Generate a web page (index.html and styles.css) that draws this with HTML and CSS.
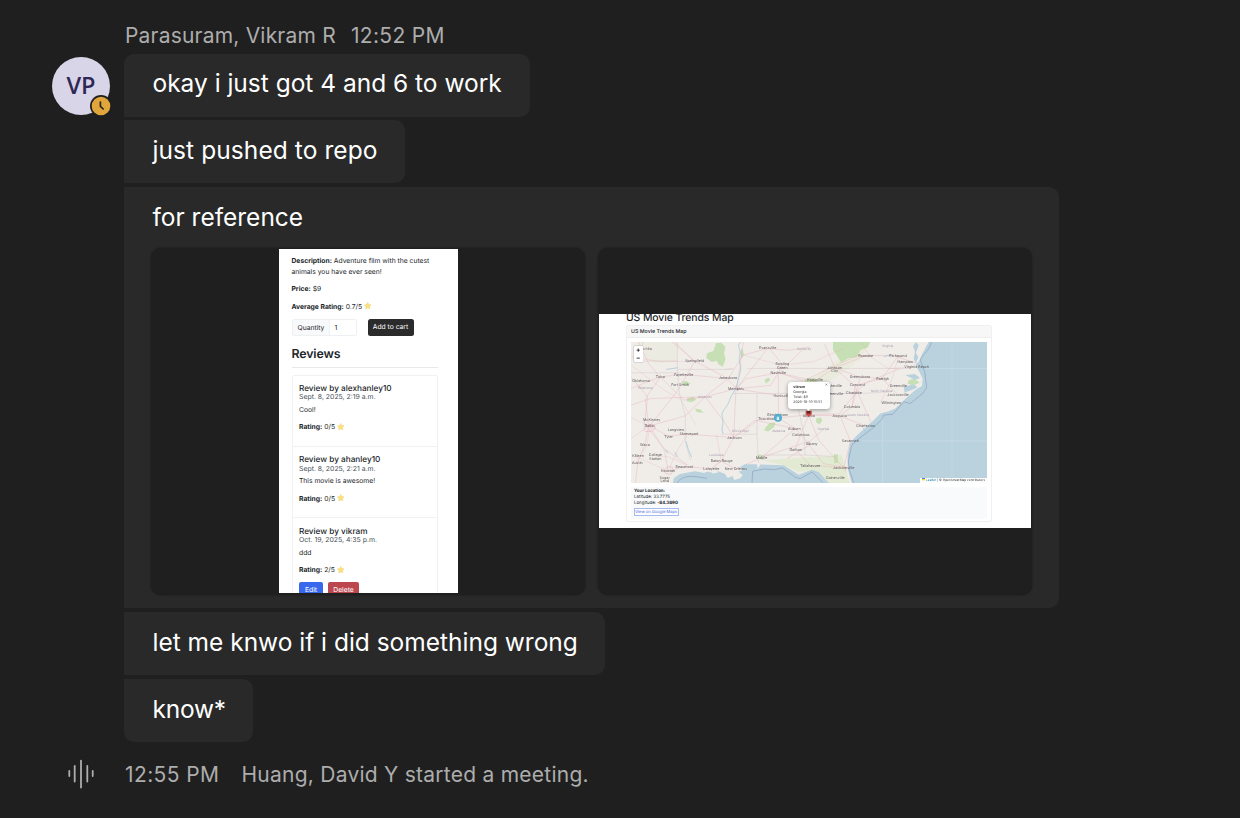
FILE: index.html
```html
<!DOCTYPE html>
<html lang="en">
<head>
<meta charset="utf-8">
<title>Chat</title>
<link rel="stylesheet" href="styles.css">
</head>
<body>
<main class="chat">
  <section class="group">
    <div class="rail">
      <div class="avatar">VP
        <svg class="presence" viewBox="0 0 22 22"><circle cx="11" cy="11" r="11" fill="#1f1f1f"/><circle cx="11" cy="11" r="9.3" fill="#e0a63b"/><path d="M10.4 7v4.3l2.8 2.7" fill="none" stroke="#2b2620" stroke-width="1.7" stroke-linecap="round"/></svg>
      </div>
    </div>
    <div class="messages">
      <header class="meta"><span class="author">Parasuram, Vikram R</span><time>12:52 PM</time></header>
      <div class="bubble b1 first"><span class="t1">okay i just got 4 and 6 to work</span></div>
      <div class="bubble b2"><span>just pushed to repo</span></div>
      <div class="bubble b3">
        <span>for reference</span>
        <div class="gallery">
          <div class="thumb">
            <div class="phone">
              <p><b>Description:</b> Adventure film with the cutest<br>animals you have ever seen!</p>
              <p><b>Price:</b> $9</p>
              <p><b>Average Rating:</b> 0.7/5 <svg class="star"><use href="#star"/></svg></p>
              <div class="buy"><div class="qty"><span>Quantity</span><span>1</span></div><div class="cart">Add to cart</div></div>
              <h2>Reviews</h2>
              <div class="list">
                <article><h3>Review by alexhanley10</h3><small>Sept. 8, 2025, 2:19 a.m.</small><div class="txt">Cool!</div><div class="rate"><b>Rating:</b> 0/5 <svg class="star"><use href="#star"/></svg></div></article>
                <article><h3>Review by ahanley10</h3><small>Sept. 8, 2025, 2:21 a.m.</small><div class="txt">This movie is awesome!</div><div class="rate"><b>Rating:</b> 0/5 <svg class="star"><use href="#star"/></svg></div></article>
                <article><h3>Review by vikram</h3><small>Oct. 19, 2025, 4:35 p.m.</small><div class="txt">ddd</div><div class="rate"><b>Rating:</b> 2/5 <svg class="star"><use href="#star"/></svg></div><div class="actions"><span class="edit">Edit</span><span class="del">Delete</span></div></article>
              </div>
            </div>
          </div>
          <div class="thumb">
            <div class="trends">
              <h1>US Movie Trends Map</h1>
              <div class="card">
                <div class="cardhead">US Movie Trends Map</div>
                <div class="mapwrap">
                  <svg class="map" viewBox="107 111 1068 422" preserveAspectRatio="none">
                    <rect x="107" y="111" width="1068" height="422" fill="#f0ede9"/>
                    <g fill="#dfe8cb" opacity=".75">
                      <path d="M125 111h120v57l-60 8-55-25z" opacity=".35"/>
                      <path d="M500 465l240-15 25 90H680l-30-45-40 5-50-22z"/>
                      <path d="M650 220l70-50 60-50 45-9-30 50-70 55-60 25z" opacity=".5"/>
                    </g>
                    <g fill="#c7dfb4">
                      <path d="M713 111h111l-6 16-22 8-12 22-26 3-20 13-14-22-11-16z"/>
                      <path d="M362 115l16-2 12 12-4 20 5 18-9 22-12-7-10-17-18-3-6-14 18-6z"/>
                      <path d="M335 144l22 4 12 18-20 5-16-12zM275 280l18-5 10 9-14 7-15-3zM298 310l17 3 10 10-20-2zM259 230l14-2 13 7-12 8-14-5zM510 368l12-14 18-3-3 14-18 14-12-3zM662 340l14-4 5 10-8 12-10-6zM716 447h12v26h-12zM486 447l20 3-2 14-16-4zM630 222l28-3 12 9-18 8-24-4zM940 225l18-4 15 12-20 8-16-5zM440 128l6 22-7 12-4-20zM508 223l12-6 5 8-13 11z"/>
                    </g>
                    <g fill="none" stroke="#cbb8c4" stroke-width="1.4" opacity=".8">
                      <path d="M246 111v82h166M142 111v57h104M246 193l6 70 18 70v76l15 55M107 203h145M388 193l26-3M378 387h107M413 265h385l90-5M485 265v125l4 83M600 265l25 120 5 65M505 449h125l90 5M455 190h240l250 0"/>
                    </g>
                    <g fill="none" stroke="#e7a9b6" stroke-width="1.6" opacity=".7">
                      <path d="M107 250l88-35 70-7 130 12 30 31 100-10 25-38 75 24 70-33 90-42 110-1 55 20 50 15M107 300l60-20 162-5 93-24 30-30 97-18 12-25-45-55M130 111l30 65 35 40-45 65 10 82-12 57-20 50-8 63M163 362l55 30 60-5 137 10 82-58 52-1 91-9 92-3 55-70 30-25 95-40M163 362l80-100 55-92-60-59M163 362l107-30 59-57 70-55 45-70 71-19 67 5 62-10M163 362l45 75 10 60 50-13 80 6 30-23 43 25 77-35 147-50 45-40M422 251l-7 146-37 70M422 251l127 20 0 67 50 32 20 20 65 85 70 12M640 330l-25 60-15 42 45 48 100 8M640 330l30 75 75 83M640 330l93 2 77 30M733 332l37-27 25-90 65 6 48-68M745 488l20-80-30-75M549 203l0 68M549 203l110 25 60-40 90-35M659 228l-19 100M770 305l10-65 80-19 50 50M599 370l-120-25-64 52M107 215l50 60-10 80 60 75 70 50M195 215l70 70 65-10 60 80 25 42M230 111l70 58 95 50M444 111l-20 140M517 130l-95 121M627 130l-78 73M790 215l-72-27-30-70M650 415l-75 45M500 456l100-86M718 188l60 55 50 110"/>
                      <path d="M107 155l90 15 103-2M107 400l55-38-55-25M120 475l35-55 8-58M125 455l55 25 35 15M180 450l40 5 55 25M278 387l-30 45-30 65M350 490l28-23-15-80M107 180l100 75 50 30 45 75M445 150l110 30 100-10 90-40M800 111l20 40 60 40 80-6M910 153l-20 70-35 70" opacity=".7"/>
                    </g>
                    <g fill="none" stroke="#e39cab" stroke-width="2" opacity=".6"><path d="M145 371l8-10 20-4 8 12-12 9-18 1zM207 494l9-9h14l5 10-9 12-15-2zM632 321h17v14h-17zM740 482l13 4-3 12M414 246l12-1 2 12M905 153l10 4M128 246h8"/></g>
                    <g fill="#b9d2dd">
                      <path d="M232 533l4-15 18-12 45-8 28 5 16-8 10 10 16-7 20 8 8 12 15-6 5 12 18-5 7-10-12-10 14-5-10-8 14-9 37 0 2 14 8-13 70 2 45 28 40-15 20 7 25 27 15 13z"/>
                      <path d="M1000 111l-17 30-12 27-10 12 11 22 7 38-28 22-20 18-31 30-20 8-25 7-25 25-45 40-20 22-8 38 0 40 12 43H1175V111z"/>
                      <path d="M962 111l8 10-8 22 7 14-8 18-6-14 4-20-6-18zM930 210l28-3 18 12-18 5zM925 245l30-7 15 10-26 8-16 6z"/>
                    </g>
                    <g fill="#f0ede9"><path d="M988 111h10l-15 30-14 24 6-30zM330 497l30-4 8 10-24-2zM395 492l30 5 8 13-22-6zM970 196l12 25-2 22-32 17 26-21z"/></g>
                    <g fill="none" stroke="#a8cbdc" stroke-width="2.5"><path d="M383 385c-8-20 5-30-2-48s14-28 20-48 22-34 26-58 14-38 7-55 5-25-2-45 5-15 5-20M272 408l7 25 10 23M210 432l8 12M213 193l35-5M865 155l20-5M803 367l9 15M238 440l9 15"/></g>
                    <g fill="none" stroke="#8d9fc3" stroke-width="2">
                      <path d="M245 533c20-30 60-18 90-14M470 533l2-35 35-7 30 2 25-5 38 28 15 4 35-20 34 33M1008 111c-5 25-25 35-33 54l13 35 6 48-12 17-37 30-20-5-32 37-28 3-5 12-25 25-38 28-28 25-10 48 3 25 13 39"/>
                    </g>
                    <path d="M800 407h375M990 190h185M1070 111v422M862 340v193" stroke="#cfe0e7" stroke-width="1.7" fill="none"/>
                    <g class="places">
                      <text x="150" y="134">Wichita</text><text x="298" y="172">Springfield</text><text x="517" y="133">Evansville</text><text x="627" y="134" class="st">Kentucky</text><text x="877" y="125" class="st">Virginia</text><text x="811" y="155">Roanoke</text><text x="908" y="157">Richmond</text><text x="930" y="173">Hampton</text><text x="964" y="189">Virginia Beach</text>
                      <text x="561" y="181">Bowling</text><text x="561" y="191">Green</text><text x="549" y="206">Nashville</text><text x="718" y="191">Johnson</text><text x="718" y="201">City</text><text x="195" y="220">Tulsa</text><text x="265" y="213">Fayetteville</text><text x="398" y="223">Jonesboro</text><text x="137" y="231">Oklahoma</text><text x="150" y="252" class="st">Oklahoma</text><text x="254" y="244">Fort Smith</text><text x="422" y="254">Memphis</text><text x="329" y="278" class="st">Arkansas</text>
                      <text x="659" y="229">Knoxville</text><text x="794" y="218">Greensboro</text><text x="862" y="224">Raleigh</text><text x="786" y="243">Concord</text><text x="909" y="247">Greenville</text><text x="859" y="261" class="st">North Carolina</text><text x="776" y="267">Charlotte</text><text x="716" y="246">Asheville</text><text x="718" y="269">Greenville</text><text x="908" y="274">Jacksonville</text><text x="888" y="298">Wilmington</text><text x="770" y="309">Columbia</text><text x="788" y="332" class="st">South Carolina</text><text x="733" y="334">Augusta</text><text x="811" y="365">Charleston</text>
                      <text x="560" y="275">Huntsville</text><text x="547" y="331">Birmingham</text><text x="518" y="345">Tuscaloosa</text><text x="640" y="335">Atlanta</text><text x="597" y="373">Auburn</text><text x="684" y="374" class="st">Georgia</text><text x="550" y="380" class="st">Alabama</text><text x="617" y="393">Columbus</text><text x="649" y="420">Albany</text><text x="601" y="437">Dothan</text><text x="765" y="410">Savannah</text><text x="499" y="460">Mobile</text><text x="645" y="484">Tallahassee</text><text x="745" y="492">Jacksonville</text><text x="720" y="520">Gainesville</text>
                      <text x="169" y="347">McKinney</text><text x="163" y="366">Dallas</text><text x="242" y="378">Longview</text><text x="220" y="398">Tyler</text><text x="281" y="390">Shreveport</text><text x="435" y="380" class="st">Mississippi</text><text x="417" y="402">Jackson</text><text x="149" y="421">Waco</text><text x="128" y="454">Killeen</text><text x="180" y="453">College</text><text x="180" y="463">Station</text><text x="126" y="477">Austin</text><text x="363" y="453" class="st">Louisiana</text><text x="379" y="470">Baton Rouge</text><text x="267" y="487">Beaumont</text><text x="348" y="494">Lafayette</text><text x="422" y="494">New Orleans</text><text x="218" y="501">Houston</text><text x="208" y="521">Sugar</text><text x="208" y="530">Land</text>
                    </g>
                    <circle cx="548" cy="338" r="12" fill="#4fa9cb"/><circle cx="548" cy="338" r="8" fill="#5db4d4"/><text x="548" y="343" font-size="13" text-anchor="middle" fill="#fff" font-weight="700">8</text>
                    <path d="M631 317h18v10l-9 8-9-8z" fill="#c84b43"/><path d="M635 318h10v7h-10z" fill="#5a2926"/>
                  </svg>
                  <div class="zoomctl"><span>+</span><span>−</span></div>
                  <div class="popup"><b>vikram</b><br>Georgia<br>Total: $9<br>2025-10-19 15:51<i>×</i></div>
                  <div class="credit"><svg viewBox="0 0 12 8"><path fill="#4c7be1" d="M0 0h12v4H0z"/><path fill="#ffd500" d="M0 4h12v4H0z"/></svg><em>Leaflet</em> | © OpenStreetMap contributors</div>
                </div>
                <div class="location"><b>Your Location:</b><br>Latitude: 33.7775<br>Longitude: <b>-84.3890</b><br><span>View on Google Maps</span></div>
              </div>
            </div>
          </div>
        </div>
      </div>
      <div class="bubble b4"><span>let me knwo if i did something wrong</span></div>
      <div class="bubble b5"><span>know*</span></div>
    </div>
  </section>
  <footer class="event">
    <svg class="wave" viewBox="0 0 30 30" fill="none" stroke="#adadad" stroke-width="1.8" stroke-linecap="round"><path d="M3.3 12v5M8.7 7v15.5M15 1.6v27M21.3 7v15.5M26.7 12v5"/></svg>
    <time>12:55 PM</time><span class="started">Huang, David Y started a meeting.</span>
  </footer>
</main>
<svg width="0" height="0" class="defs"><symbol id="star" viewBox="0 0 20 20"><path d="M10 1l2.8 5.8 6.3.9-4.6 4.4 1.1 6.3L10 15.4l-5.6 3 1.1-6.3L.9 7.7l6.3-.9z" fill="#fbe07c" stroke="#f0c75c"/></symbol></svg>
</body>
</html>
```
FILE: styles.css
```css
* { box-sizing: border-box; }
body { margin: 0; width: 1240px; height: 818px; overflow: hidden; background: #1f1f1f; color: #fff; font-family: Inter, "Liberation Sans", sans-serif; }
.defs { position: absolute; }
.chat { padding-top: 18px; }
.group { display: flex; }
.rail { width: 124px; padding: 39px 0 0 52px; flex: none; }
.avatar { position: relative; width: 58px; height: 58px; border-radius: 50%; background: #d8d5e8; color: #2f2857; font: 600 23.5px/57px "Open Sans", sans-serif; text-align: center; }
.presence { position: absolute; left: 38px; top: 38px; width: 22px; height: 22px; }
.messages { display: flex; flex-direction: column; align-items: flex-start; gap: 4px; }
.meta { height: 32px; padding-left: 1px; font-size: 21px; line-height: 35px; color: #adadad; display: flex; gap: 15px; letter-spacing: .2px; }
.meta time { letter-spacing: .35px; }
.bubble { background: #292929; border-radius: 0 10px 10px 0; height: 63px; padding: 0 28.5px; font-size: 24.5px; line-height: 60px; white-space: nowrap; letter-spacing: -.01px; }
.bubble > span { display: block; }
.first { border-top-left-radius: 10px; margin-bottom: -1px; line-height: 59px; }
.b1 { width: 406px; }
.b2 { width: 281px; letter-spacing: .08px; }
.b3 { width: 935px; height: 421px; padding-left: 27px; }
.b3 > span { padding-left: 1.5px; height: 61px; }
.b4 { width: 481px; }
.b5 { width: 129px; border-bottom-left-radius: 10px; letter-spacing: -.25px; }
.gallery { display: flex; gap: 13px; line-height: normal; letter-spacing: 0; text-rendering: geometricPrecision; }
.thumb { flex: none; width: 434px; height: 347px; border-radius: 10px; background: #1f1f1f; box-shadow: 0 0 2px #181818; padding: 1px; display: flex; justify-content: center; align-items: flex-start; overflow: hidden; }
.phone { width: 179px; height: 344px; overflow: hidden; background: #fff; color: #212529; padding: 7.2px 19.5px 0 13px; font-size: 6.75px; line-height: 10.4px; }
.phone p { margin: 0 0 7.2px; }
.star { width: 7.5px; height: 7.5px; vertical-align: -1.2px; }
.buy { display: flex; gap: 10.5px; height: 16.6px; line-height: 15.5px; margin-top: -.4px; }
.qty { display: flex; width: 65.5px; border: .5px solid #eef0f2; border-radius: 2px; }
.qty span { padding-left: 5px; }
.qty span:first-child { width: 37px; background: #f8f9fa; border-right: 1px solid #f0f1f3; }
.cart { width: 46px; border-radius: 2.5px; background: #2b2b2c; color: #fff; text-align: center; line-height: 16.6px; }
.phone h2 { margin: 9px 0 6.5px; height: 23.5px; border-bottom: 1px solid #e8e8ea; font-size: 12.4px; line-height: 17px; font-weight: 600; letter-spacing: -.15px; }
.list { border: 1px solid #f1f1f3; border-radius: 2px; }
.list article { height: 71.4px; padding: 7.2px 6.5px 0; border-bottom: 1px solid #f1f1f3; }
.list article:last-child { height: 90px; }
.list h3 { margin: 0; font-size: 8.2px; line-height: 10.4px; font-weight: 500; }
.list small { display: block; font-size: 6.9px; line-height: 8.5px; color: #495057; }
.txt { margin-top: 3.3px; }
.rate { margin-top: 7px; }
.actions { display: flex; gap: 5px; margin-top: 6.3px; color: #fff; line-height: 16px; text-align: center; }
.edit { width: 24px; background: #3968ec; border-radius: 2px; }
.del { width: 31px; background: #bd474e; border-radius: 2px; }
.trends { width: 432px; height: 214px; margin-top: 65px; flex: none; overflow: hidden; background: #fff; color: #212529; padding: 0 39px 0 27px; }
.trends h1 { margin: -4px 0 0; font-size: 10.4px; line-height: 15px; height: 15px; font-weight: 500; letter-spacing: -.08px; white-space: nowrap; }
.card { height: 197px; border: 1px solid #f0f0f0; border-radius: 2px; }
.cardhead { height: 11.5px; background: #f7f7f7; border-bottom: 1px solid #eee; padding-left: 4px; font-size: 5.3px; line-height: 12.5px; font-weight: 500; }
.mapwrap { position: relative; width: 356px; height: 141px; margin: 4px 0 0 4px; }
.map { display: block; width: 356px; height: 141px; filter: blur(.3px); }
.places { font-size: 11px; fill: #5d595d; text-anchor: middle; }
.places .st { fill: #a79bae; font-size: 9.5px; }
.zoomctl { position: absolute; left: 3px; top: 4px; width: 8.5px; height: 16.5px; background: #fff; border-radius: 1px; box-shadow: 0 0 0 .5px #bbb; display: flex; flex-direction: column; font: 700 6.5px/8.2px Inter, sans-serif; text-align: center; color: #111; }
.popup { position: absolute; left: 156.5px; top: 40px; width: 42px; height: 27px; border-radius: 3.5px; background: #fff; box-shadow: 0 1px 4px #0006; padding: 3.8px 0 0 5.8px; font-size: 3.55px; line-height: 4.8px; white-space: nowrap; color: #333; }
.popup::after { content: ""; position: absolute; left: 18.5px; top: 25px; width: 5px; height: 5px; background: #fff; clip-path: polygon(0 30%, 100% 30%, 50% 90%); }
.popup i { position: absolute; right: 1.5px; top: 1px; font: 5px/5px Inter, sans-serif; color: #777; }
.credit { position: absolute; right: 0; bottom: 0; width: 67px; height: 5px; background: #fffffff0; padding-left: 1.5px; font-size: 3.15px; line-height: 4.8px; color: #333; white-space: nowrap; }
.credit svg { width: 3.5px; height: 2.3px; margin-right: 1px; }
.credit em { font-style: normal; color: #0078a8; }
.location { margin: 4px 4px 0; height: 32px; background: #f8fafc; padding: 2px 3px; font-size: 4.4px; line-height: 6px; }
.location span { display: block; width: 44.5px; height: 8px; margin-top: 1px; border: 1px solid #a9baf2; color: #3d63de; line-height: 6px; font-size: 4.05px; text-align: center; white-space: nowrap; background: #fff; }
.event { display: flex; align-items: center; margin-top: 17px; height: 30px; padding-left: 66px; font-size: 21px; color: #adadad; letter-spacing: .25px; }
.wave { width: 30px; height: 30px; }
.event time { margin-left: 29px; width: 116.5px; letter-spacing: .4px; }
```
